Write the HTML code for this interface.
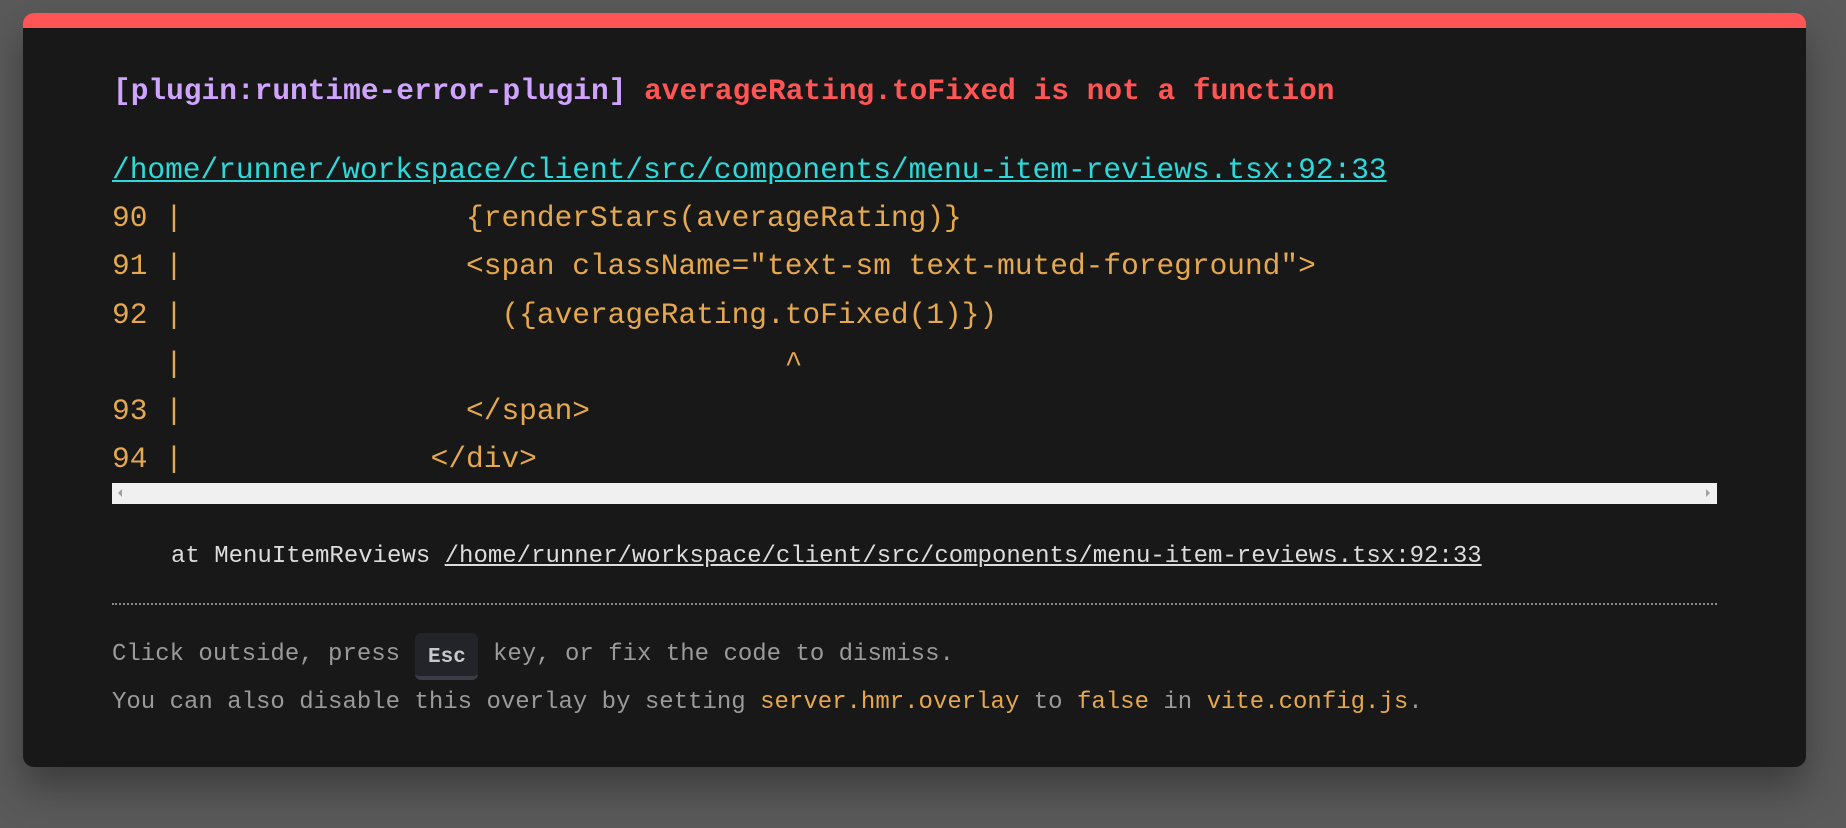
<!DOCTYPE html>
<html><head><style>
html,body{margin:0;padding:0;}
body{width:1846px;height:828px;background:#5a5a5a;position:relative;overflow:hidden;font-family:"Liberation Mono",monospace;}
.panel{position:absolute;left:23px;top:13px;width:1783px;height:754px;background:#181818;border-radius:11px;border-top:15px solid #ff5555;box-sizing:border-box;box-shadow:0 20px 40px rgba(0,0,0,0.35);}
.t{position:absolute;white-space:pre;line-height:1;}
.m{font-size:29.5px;}
.s{font-size:24px;}
.code{color:#e5a84e;}
</style></head><body>
<div class="panel"></div>
<div class="t m" style="left:113px;top:77px;font-weight:bold;"><span style="color:#cfa4ff">[plugin:runtime-error-plugin]</span> <span style="color:#ff5555">averageRating.toFixed is not a function</span></div>
<div class="t m" style="left:112px;top:156px;color:#2dd9da;text-decoration:underline;">/home/runner/workspace/client/src/components/menu-item-reviews.tsx:92:33</div>
<div class="t m code" style="left:112px;top:204px;">90 |                {renderStars(averageRating)}</div>
<div class="t m code" style="left:112px;top:252px;">91 |                &lt;span className="text-sm text-muted-foreground"&gt;</div>
<div class="t m code" style="left:112px;top:301px;">92 |                  ({averageRating.toFixed(1)})</div>
<div class="t m code" style="left:112px;top:350px;">   |                                  ^</div>
<div class="t m code" style="left:112px;top:397px;">93 |                &lt;/span&gt;</div>
<div class="t m code" style="left:112px;top:445px;">94 |              &lt;/div&gt;</div>
<div style="position:absolute;left:112px;top:483px;width:1605px;height:21px;background:#f0f0f0;"></div>
<div style="position:absolute;left:118px;top:489px;width:0;height:0;border-top:4px solid transparent;border-bottom:4px solid transparent;border-right:4px solid #a0a0a0;"></div>
<div style="position:absolute;left:1706px;top:489px;width:0;height:0;border-top:4px solid transparent;border-bottom:4px solid transparent;border-left:4px solid #a0a0a0;"></div>
<div class="t s" style="left:171px;top:545px;color:#dcdcdc;">at MenuItemReviews <span style="text-decoration:underline">/home/runner/workspace/client/src/components/menu-item-reviews.tsx:92:33</span></div>
<div style="position:absolute;left:112px;top:603px;width:1605px;border-top:2px dotted #8a8a8a;"></div>
<div class="t s" style="left:112px;top:643px;color:#9a9a9a;">Click outside, press</div>
<div class="t s" style="left:493px;top:643px;color:#9a9a9a;">key, or fix the code to dismiss.</div>
<div style="position:absolute;left:415px;top:633px;width:63px;height:47px;background:#22242a;border-radius:6px;border-bottom:4px solid #3a3d45;box-sizing:border-box;"></div>
<div class="t" style="left:428px;top:647px;font-size:21px;font-weight:bold;color:#c8c8c8;">Esc</div>
<div class="t s" style="left:112px;top:691px;color:#9a9a9a;">You can also disable this overlay by setting <span style="color:#e5a84e">server.hmr.overlay</span> to <span style="color:#e5a84e">false</span> in <span style="color:#e5a84e">vite.config.js</span>.</div>
</body></html>
